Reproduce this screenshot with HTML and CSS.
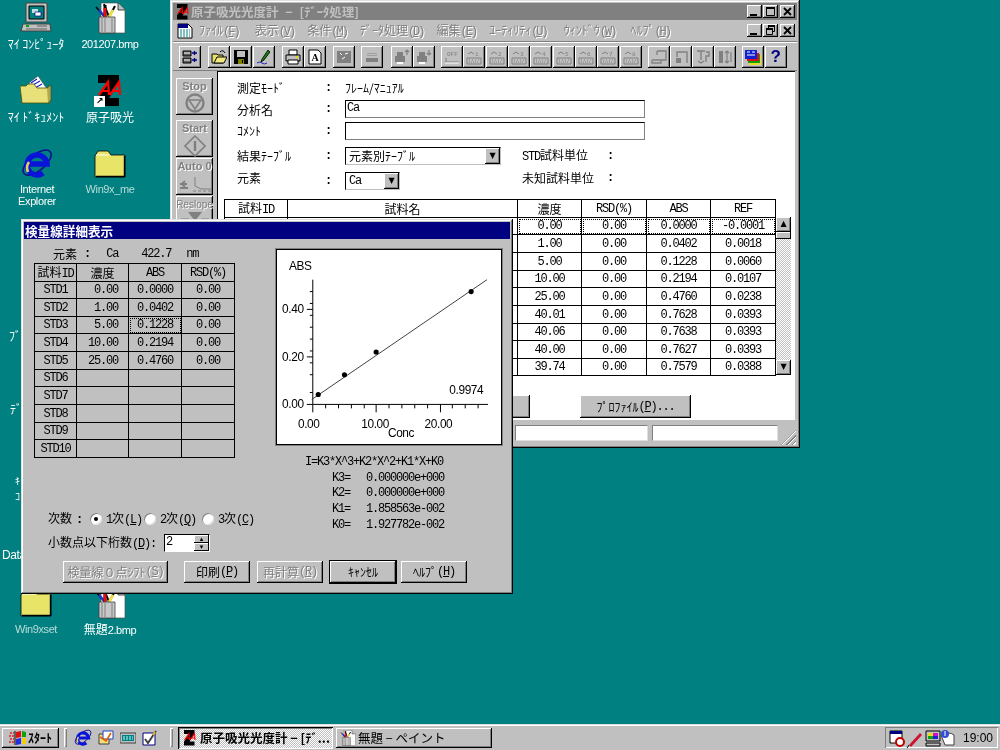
FILE: index.html
```html
<!DOCTYPE html>
<html lang="ja">
<head>
<meta charset="utf-8">
<title>原子吸光光度計</title>
<link rel="stylesheet" href="styles.css">
</head>
<body>
<svg class="defs" aria-hidden="true">
  <symbol id="zlogo" viewBox="0 0 32 32">
    <path d="M4 0H25V8L15 23H25V31H4V23L14 8H4Z" fill="#000"/>
    <g fill="none" stroke="#f00" stroke-width="2.2">
      <path d="M5 20 14 7 15 20M8 16H15"/><path d="M16 20 25 7 26 20M19 16H26"/>
    </g>
  </symbol>
  <symbol id="computer" viewBox="0 0 32 32">
    <path d="M6 1H27V20H6Z" fill="#c0c0c0" stroke="#404040"/>
    <path d="M9 4H24V17H9Z" fill="#008080" stroke="#000"/>
    <path d="M12 7H18V11H12Z" fill="#c0e0e0"/><path d="M15 10H21V14H15Z" fill="#fff" stroke="#000080" stroke-width=".7"/>
    <path d="M3 22H30L31 29H1Z" fill="#c0c0c0" stroke="#404040"/>
    <path d="M6 24H9" stroke="#0a0" stroke-width="2"/><path d="M17 24H27M6 27H27" stroke="#606060"/>
  </symbol>
  <symbol id="paintdoc" viewBox="0 0 32 32">
    <path d="M7 1H24L31 8V31H7Z" fill="#fff" stroke="#505050" stroke-width=".7"/>
    <path d="M24 1V8H31" fill="#c0c0c0" stroke="#000" stroke-width=".7"/>
    <path d="M10 2 15 15" stroke="#000" stroke-width="2"/>
    <path d="M2 5 11 15" stroke="#000" stroke-width="1.6"/><path d="M5 8 11 15" stroke="#2030d0" stroke-width="2.4"/>
    <path d="M11 3V15" stroke="#000" stroke-width="3"/><path d="M11 6V15" stroke="#e01010" stroke-width="3"/>
    <path d="M21 4 15 15" stroke="#000" stroke-width="2"/><path d="M19 8 15 15" stroke="#f0e040" stroke-width="2.6"/>
    <path d="M5 15H21V31H5Z" fill="#c8c8c8" stroke="#404040" stroke-width=".8"/>
    <path d="M8 16V30M11 16V30M18 16V30" stroke="#808080"/>
  </symbol>
  <symbol id="docfolder" viewBox="0 0 32 32">
    <path d="M9 8 18 1 27 14 18 20Z" fill="#fff" stroke="#505050" stroke-width=".6"/>
    <path d="M11 8 17 4M13 10 20 6M15 13 22 9" stroke="#2020c0" stroke-width="1.2"/>
    <path d="M0 11H6L8 9H14L17 13H30V28H2Z" fill="#e8e078" stroke="#505000" stroke-width=".8"/>
    <path d="M27 13 31 10V25L28 28" fill="#b0a850" stroke="#404000" stroke-width=".6"/>
  </symbol>
  <symbol id="folder" viewBox="0 0 32 28">
    <path d="M1 6 4 1H14L17 5H31V27H1Z" fill="#e8e468" stroke="#000" stroke-width=".8"/>
    <path d="M2 5H15" stroke="#fff"/>
    <path d="M2 26.5H30.5V6" fill="none" stroke="#000" stroke-width="1.4"/>
  </symbol>
  <symbol id="ie" viewBox="0 0 32 32">
    <ellipse cx="17" cy="15" rx="17" ry="8" transform="rotate(-40 16 16)" fill="none" stroke="#101090" stroke-width="1.6"/>
    <path d="M8 16H26A10 10 0 1 0 22 25" fill="none" stroke="#0a14d8" stroke-width="5.5"/>
    <path d="M8 14A10 10 0 0 0 7 24" fill="none" stroke="#e8d060" stroke-width="2.6"/>
  </symbol>
  <symbol id="flag" viewBox="0 0 18 16">
    <path d="M7 2 12 1V7L7 8Z" fill="#e01010"/><path d="M13 1 17 2V7L13 7Z" fill="#10a010"/>
    <path d="M7 9 12 8V14L7 15Z" fill="#2030e0"/><path d="M13 8 17 8V14L13 14Z" fill="#f0d000"/>
    <path d="M1 3H5M0 6H5M1 9H5M0 12H5" stroke="#e02020" stroke-width="1.4" stroke-dasharray="2 1"/>
    <path d="M6 1V15" stroke="#000"/>
  </symbol>
  <symbol id="kbd" viewBox="0 0 16 16">
    <path d="M1 9H15V15H1Z" fill="#c0c0c0" stroke="#808080"/>
    <path d="M3 11H4M6 11H7M9 11H10M12 11H13M3 13H13" stroke="#808080" stroke-dasharray="1 1"/>
    <path d="M2 5 5 3 8 5" fill="none" stroke="#808080"/>
  </symbol>
  <symbol id="c-min" viewBox="0 0 15 13"><path d="M3 9H10V11H3Z" fill="#000"/></symbol>
  <symbol id="c-max" viewBox="0 0 15 13"><path d="M3 2.500H11.500V10.500H3.500V2.500" fill="none" stroke="#000"/><path d="M3 2H12V4H3Z" fill="#000"/></symbol>
  <symbol id="c-res" viewBox="0 0 15 13"><path d="M5.500 1.500H11.500V7.500H9.500M5.500 1.500V4M3.500 4.500H9.500V10.500H3.500Z" fill="none" stroke="#000"/><path d="M5 1H12V3H5ZM3 4H10V6H3Z" fill="#000"/></symbol>
  <symbol id="c-x" viewBox="0 0 15 13"><path d="M4 3 11 10M11 3 4 10" stroke="#000" stroke-width="1.8"/></symbol>
</svg>

<main class="desktop">
  <div class="di di-comp"><svg class="ic32"><use href="#computer"/></svg><span class="lbl">ﾏｲ ｺﾝﾋﾟｭｰﾀ</span></div>
  <div class="di di-bmp"><svg class="ic32"><use href="#paintdoc"/></svg><span class="lbl lat">201207.bmp</span></div>
  <div class="di di-docs"><svg class="ic32"><use href="#docfolder"/></svg><span class="lbl">ﾏｲ ﾄﾞｷｭﾒﾝﾄ</span></div>
  <div class="di di-z"><span class="zwrap"><svg class="ic32"><use href="#zlogo"/></svg><span class="shortcut">↗</span></span><span class="lbl">原子吸光</span></div>
  <div class="di di-ie"><svg class="ic32"><use href="#ie"/></svg><span class="lbl lat">Internet<br>Explorer</span></div>
  <div class="di di-f1"><svg class="ic32"><use href="#folder"/></svg><span class="lbl lat dim">Win9x_me</span></div>
  <div class="di di-f2"><svg class="ic32"><use href="#folder"/></svg><span class="lbl lat dim">Win9xset</span></div>
  <div class="di di-mu"><svg class="ic32"><use href="#paintdoc"/></svg><span class="lbl">無題<span class="lat">2.bmp</span></span></div>
  <span class="peek peek-a">ﾌﾞ</span>
  <span class="peek peek-b">ﾃﾞ</span>
  <span class="peek peek-c">ｷ<br>ｺ</span>
  <span class="peek peek-d lat">Data</span>

  <section class="win main-win">
    <header class="titlebar inactive">
      <svg class="ic16"><use href="#zlogo"/></svg>
      <span class="title-text">原子吸光光度計 − [ﾃﾞｰﾀ処理]</span>
      <span class="caps">
        <span class="cap"><svg><use href="#c-min"/></svg></span><span class="cap cap-gap"><svg><use href="#c-max"/></svg></span><span class="cap"><svg><use href="#c-x"/></svg></span>
      </span>
    </header>
    <nav class="menubar">
      <svg class="docicon" viewBox="0 0 16 16"><path d="M1 1H11L15 5V15H1Z" fill="#fff" stroke="#000"/><path d="M1 1H11V5H1Z" fill="#000080"/><path d="M3 7H13M3 9H13M3 11H13M3 13H13" stroke="#008080" stroke-dasharray="2 1"/></svg>
      <span class="mi mi-a">ﾌｧｲﾙ<span class="m">(<u>F</u>)</span></span>
      <span class="mi">表示<span class="m">(<u>V</u>)</span></span>
      <span class="mi">条件<span class="m">(<u>M</u>)</span></span>
      <span class="mi">ﾃﾞｰﾀ処理<span class="m">(<u>D</u>)</span></span>
      <span class="mi">編集<span class="m">(<u>E</u>)</span></span>
      <span class="mi mi-u">ﾕｰﾃｨﾘﾃｨ<span class="m">(<u>U</u>)</span></span>
      <span class="mi mi-w">ｳｨﾝﾄﾞｳ<span class="m">(<u>W</u>)</span></span>
      <span class="mi">ﾍﾙﾌﾟ<span class="m">(<u>H</u>)</span></span>
      <span class="caps caps-mdi">
        <span class="cap"><svg><use href="#c-min"/></svg></span><span class="cap cap-gap"><svg><use href="#c-res"/></svg></span><span class="cap"><svg><use href="#c-x"/></svg></span>
      </span>
    </nav>
    <div class="toolbar">
      <span class="tb g0"><svg viewBox="0 0 16 16"><path d="M1 2H9V7H1ZM1 9H9V14H1Z" fill="#606060" stroke="#000"/><path d="M2 4H8M2 11H8" stroke="#fff"/><path d="M10 4H15M12.500 2V6M10 11H15M12.500 9V13" stroke="#000080" stroke-width="1.4"/></svg></span>
      <span class="tb g1"><svg viewBox="0 0 16 16"><path d="M1 5H6L7 6H12V14H1Z" fill="#e8e068" stroke="#000"/><path d="M3 14 6 8H16L13 14Z" fill="#f0e880" stroke="#000"/><path d="M9 3Q12 0 14 4" fill="none" stroke="#000"/></svg></span>
      <span class="tb"><svg viewBox="0 0 16 16"><path d="M1 1H15V15H1Z" fill="#000"/><path d="M4 2H12V8H4Z" fill="#c0c0c0"/><path d="M5 10H11V15H5Z" fill="#808000"/><path d="M9 11H10V14H9Z" fill="#000"/></svg></span>
      <span class="tb"><svg viewBox="0 0 16 16"><path d="M12 1 6 10 5 13 8 11 14 3Z" fill="#108010" stroke="#000" stroke-width=".8"/><path d="M1 14Q4 12 6 14T11 14" fill="none" stroke="#2020c0"/></svg></span>
      <span class="tb g2"><svg viewBox="0 0 16 16"><path d="M4 1H12V6H4Z" fill="#fff" stroke="#000"/><path d="M1 6H15V12H1Z" fill="#c0c0c0" stroke="#000"/><path d="M3 11H13V15H3Z" fill="#fff" stroke="#000"/><path d="M11 8H13" stroke="#e0e000" stroke-width="2"/></svg></span>
      <span class="tb"><svg viewBox="0 0 16 16"><path d="M2 1H11L14 4V15H2Z" fill="#fff" stroke="#000"/><text x="4.500" y="12" class="tbt">A</text></svg></span>
      <span class="tb g2 dis"><svg viewBox="0 0 16 16"><path d="M1 2H15V14H1Z" fill="#808080"/><path d="M4 4 6 6M9 5 12 4M6 10 9 8" stroke="#fff"/></svg></span>
      <span class="tb g3 dis"><svg viewBox="0 0 16 16"><path d="M2 9H14V13H2Z" fill="#808080"/><path d="M4 7V4M6 7V4M8 7V4M10 7V4M12 7V4" stroke="#808080" stroke-dasharray="1 1"/></svg></span>
      <span class="tb g4 dis"><svg viewBox="0 0 16 16"><path d="M1 7H11V13H1ZM3 7V3H9V7" fill="#808080"/><path d="M3 13H9V15H3Z" fill="#fff"/><path d="M13 1V6M11 3 13 1 15 3" fill="none" stroke="#808080" stroke-width="1.2"/></svg></span>
      <span class="tb dis"><svg viewBox="0 0 16 16"><path d="M1 7H11V13H1ZM3 7V3H9V7" fill="#808080"/><path d="M3 13H9V15H3Z" fill="#fff"/><path d="M13 1V6M11 4 13 6 15 4" fill="none" stroke="#808080" stroke-width="1.2"/></svg></span>
      <span class="tb g5 dis"><svg viewBox="0 0 16 16"><text x="3" y="7" class="tbn">OFF</text><path d="M1 13H15M2 9V13" stroke="#808080"/><path d="M1 14H15" stroke="#fff"/></svg></span>
      <span class="tb dis"><svg viewBox="0 0 16 16"><use href="#kbd"/><text x="9" y="7" class="tbn">1</text></svg></span>
      <span class="tb dis"><svg viewBox="0 0 16 16"><use href="#kbd"/><text x="9" y="7" class="tbn">2</text></svg></span>
      <span class="tb dis"><svg viewBox="0 0 16 16"><use href="#kbd"/><text x="9" y="7" class="tbn">3</text></svg></span>
      <span class="tb dis"><svg viewBox="0 0 16 16"><use href="#kbd"/><text x="9" y="7" class="tbn">4</text></svg></span>
      <span class="tb dis"><svg viewBox="0 0 16 16"><use href="#kbd"/><text x="9" y="7" class="tbn">5</text></svg></span>
      <span class="tb dis"><svg viewBox="0 0 16 16"><use href="#kbd"/><text x="9" y="7" class="tbn">6</text></svg></span>
      <span class="tb dis"><svg viewBox="0 0 16 16"><use href="#kbd"/><text x="9" y="7" class="tbn">7</text></svg></span>
      <span class="tb dis"><svg viewBox="0 0 16 16"><use href="#kbd"/><text x="9" y="7" class="tbn">8</text></svg></span>
      <span class="tb g6 dis"><svg viewBox="0 0 16 16"><path d="M6 2H15V11H6M6 2V6M1 11H10M1 11V14H10V11" fill="none" stroke="#808080" stroke-width="1.3"/></svg></span>
      <span class="tb dis"><svg viewBox="0 0 16 16"><path d="M4 8V3H14V14" fill="none" stroke="#808080" stroke-width="1.4"/><path d="M3 9H8V14H3Z" fill="#808080"/></svg></span>
      <span class="tb dis"><svg viewBox="0 0 16 16"><path d="M2 2H10M6 2V11M11 3H14V7H11V13M3 12 6 14 9 12" fill="none" stroke="#808080" stroke-width="1.4"/></svg></span>
      <span class="tb dis"><svg viewBox="0 0 16 16"><path d="M2 2H6V14H2Z" fill="#808080"/><path d="M10 2V14M8 4 10 2 12 4M8 12 10 14 12 12M14 3V13" fill="none" stroke="#808080" stroke-width="1.2"/></svg></span>
      <span class="tb g7"><svg viewBox="0 0 16 16"><path d="M4 6H16V16H4Z" fill="#e8e020"/><path d="M3 5H15V14H3Z" fill="#10a010"/><path d="M2 4H14V12H2Z" fill="#e01010"/><path d="M0 1H12V10H0Z" fill="#1020d0"/><path d="M2 3H5M7 3H10M2 6H10" stroke="#fff"/></svg></span>
      <span class="tb help-btn">?</span>
    </div>
    <div class="work">
      <aside class="side">
        <span class="sbtn">Stop<svg viewBox="0 0 20 20"><circle cx="10" cy="10" r="8.500" fill="none" stroke="#808080" stroke-width="2.400"/><path d="M4 7H16L10 16Z" fill="none" stroke="#808080" stroke-width="1.600"/></svg></span>
        <span class="sbtn sbtn-start">Start<svg viewBox="0 0 22 22"><path d="M11 1 21 11 11 21 1 11Z" fill="none" stroke="#808080" stroke-width="1.600"/><path d="M11 6V16" stroke="#808080" stroke-width="2.400"/></svg></span>
        <span class="sbtn sbtn-auto">Auto 0<svg viewBox="0 0 32 16"><path d="M1 8H8M1 12H9M6 5 3 8 6 11" fill="none" stroke="#808080" stroke-width="2"/><path d="M16 1V10L22 13H32" fill="none" stroke="#808080"/><path d="M14 15H32" stroke="#808080" stroke-dasharray="3 2"/></svg></span>
        <span class="sbtn sbtn-res">Reslope<svg viewBox="0 0 32 14"><path d="M9 1H23L16 10Z" fill="#808080"/><path d="M2 8H10V14H2ZM22 8H30V14H22Z" fill="none" stroke="#808080"/></svg></span>
      </aside>
      <div class="client">
        <div class="form">
          <span>測定ﾓｰﾄﾞ</span><span class="colon">:</span><span class="val">ﾌﾚｰﾑ/ﾏﾆｭｱﾙ</span>
          <span class="lift-s">分析名</span><span class="colon">:</span><span class="input input-long m">Ca</span>
          <span>ｺﾒﾝﾄ</span><span class="colon">:</span><span class="input input-long"></span>
          <span>結果ﾃｰﾌﾞﾙ</span><span class="colon">:</span>
          <span class="unit-row">
            <span class="combo combo-long">元素別ﾃｰﾌﾞﾙ<span class="drop">▼</span></span>
            <span class="unit"><span class="m">STD</span>試料単位</span><span class="colon">:</span>
          </span>
          <span class="lift">元素</span><span class="colon">:</span>
          <span class="unit-row">
            <span class="combo combo-short"><span class="m">Ca</span><span class="drop">▼</span></span>
            <span class="unit unit-b lift">未知試料単位</span><span class="colon lift">:</span>
          </span>
        </div>
        <div class="table-wrap">
          <table class="grid main-grid m">
            <colgroup><col class="c1"><col class="c2"><col class="c3"><col class="c4"><col class="c3"><col class="c4"></colgroup>
            <tr class="r18"><th class="j">試料<span class="m">ID</span></th><th class="j">試料名</th><th class="j">濃度</th><th>RSD(%)</th><th>ABS</th><th>REF</th></tr>
            <tr class="r17"><td></td><td></td><td class="focus">0.00</td><td class="focus">0.00</td><td class="focus">0.0000</td><td class="focus">-0.0001</td></tr>
            <tr class="r18"><td></td><td></td><td>1.00</td><td>0.00</td><td>0.0402</td><td>0.0018</td></tr>
            <tr class="r18"><td></td><td></td><td>5.00</td><td>0.00</td><td>0.1228</td><td>0.0060</td></tr>
            <tr class="r17"><td></td><td></td><td>10.00</td><td>0.00</td><td>0.2194</td><td>0.0107</td></tr>
            <tr class="r18"><td></td><td></td><td>25.00</td><td>0.00</td><td>0.4760</td><td>0.0238</td></tr>
            <tr class="r18"><td></td><td></td><td>40.01</td><td>0.00</td><td>0.7628</td><td>0.0393</td></tr>
            <tr class="r17"><td></td><td></td><td>40.06</td><td>0.00</td><td>0.7638</td><td>0.0393</td></tr>
            <tr class="r18"><td></td><td></td><td>40.00</td><td>0.00</td><td>0.7627</td><td>0.0393</td></tr>
            <tr class="r17"><td></td><td></td><td>39.74</td><td>0.00</td><td>0.7579</td><td>0.0388</td></tr>
          </table>
          <div class="vscroll">
            <span class="sb-btn">▲</span><span class="sb-thumb"></span><span class="sb-track"></span><span class="sb-btn">▼</span>
          </div>
        </div>
        <div class="client-btns">
          <span class="btn wide"></span>
          <span class="btn wide">ﾌﾟﾛﾌｧｲﾙ<span class="m">(<u>P</u>)...</span></span>
        </div>
      </div>
    </div>
    <footer class="status">
      <span class="sfield sf-a"></span><span class="sfield sf-b"></span>
      <span class="grip"></span>
    </footer>
  </section>

  <section class="win dialog">
    <header class="titlebar active"><span class="title-text">検量線詳細表示</span></header>
    <div class="dlg-body">
      <div class="dlg-left">
        <div class="info">元素<span class="info-c">:</span><span class="m info-ca">Ca</span><span class="m info-w">422.7</span><span class="m">nm</span></div>
        <table class="grid dlg-grid m">
          <colgroup><col class="d1"><col class="d2"><col class="d3"><col class="d4"></colgroup>
          <tr class="r18"><th class="j">試料<span class="m">ID</span></th><th class="j">濃度</th><th>ABS</th><th>RSD(%)</th></tr>
          <tr class="r17"><td>STD1</td><td class="rt">0.00</td><td>0.0000</td><td>0.00</td></tr>
          <tr class="r18"><td>STD2</td><td class="rt">1.00</td><td>0.0402</td><td>0.00</td></tr>
          <tr class="r17"><td>STD3</td><td class="rt">5.00</td><td class="focus">0.1228</td><td>0.00</td></tr>
          <tr class="r18"><td>STD4</td><td class="rt">10.00</td><td>0.2194</td><td>0.00</td></tr>
          <tr class="r18"><td>STD5</td><td class="rt">25.00</td><td>0.4760</td><td>0.00</td></tr>
          <tr class="r17"><td>STD6</td><td></td><td></td><td></td></tr>
          <tr class="r18"><td>STD7</td><td></td><td></td><td></td></tr>
          <tr class="r18"><td>STD8</td><td></td><td></td><td></td></tr>
          <tr class="r17"><td>STD9</td><td></td><td></td><td></td></tr>
          <tr class="r18"><td>STD10</td><td></td><td></td><td></td></tr>
        </table>
        <div class="order">
          <span class="order-l">次数<span class="info-c2">:</span></span>
          <span class="radio on"></span><span class="rl"><span class="m">1</span>次<span class="m">(<u>L</u>)</span></span>
          <span class="radio"></span><span class="rl rl-b"><span class="m">2</span>次<span class="m">(<u>Q</u>)</span></span>
          <span class="radio"></span><span class="rl"><span class="m">3</span>次<span class="m">(<u>C</u>)</span></span>
        </div>
        <div class="digits">
          <span class="digits-l">小数点以下桁数<span class="m">(<u>D</u>):</span></span>
          <span class="spin"><span class="m spin-v">2</span><span class="spin-btns"><span class="spin-b">▴</span><span class="spin-b">▾</span></span></span>
        </div>
      </div>
      <div class="dlg-right">
        <svg class="chart" viewBox="0 0 226 196">
          <path class="axis" d="M36 30V156M36 156H213"/>
          <path class="axis" d="M33 42H36M33 54H36M33 66H36M33 78H36M33 90H36M33 102H36M33 114H36M33 126H36M33 144H36M30 60H36M30 108H36M30 156H36"/>
          <path class="axis" d="M49 156V160M62 156V160M75 156V160M88 156V160M113 156V160M126 156V160M139 156V160M152 156V160M177 156V160M190 156V160M203 156V160M36 156V164M100 156V164M165 156V164"/>
          <path class="fit" d="M35 151 212 30"/>
          <circle cx="41.500" cy="146" r="2.600"/><circle cx="68" cy="126" r="2.600"/><circle cx="100" cy="103" r="2.600"/><circle cx="196" cy="42" r="2.600"/>
          <text x="12" y="20" class="ct">ABS</text>
          <text x="5" y="64" class="ct">0.40</text><text x="5" y="112" class="ct">0.20</text><text x="5" y="160" class="ct">0.00</text>
          <text x="21" y="180" class="ct">0.00</text><text x="85" y="180" class="ct">10.00</text><text x="149" y="180" class="ct">20.00</text>
          <text x="112" y="189" class="ct">Conc</text>
          <text x="174" y="145" class="ct">0.9974</text>
        </svg>
        <div class="eq m">
          <div>I=K3*X^3+K2*X^2+K1*X+K0</div>
          <div class="kv"><span>K3=</span><span>0.000000e+000</span></div>
          <div class="kv"><span>K2=</span><span>0.000000e+000</span></div>
          <div class="kv"><span>K1=</span><span>1.858563e-002</span></div>
          <div class="kv"><span>K0=</span><span>1.927782e-002</span></div>
        </div>
      </div>
    </div>
    <div class="dlg-btns">
      <span class="btn b-shift disabled">検量線０点ｼﾌﾄ<span class="m">(<u>S</u>)</span></span>
      <span class="btn b-mid">印刷<span class="m">(<u>P</u>)</span></span>
      <span class="btn b-mid disabled">再計算<span class="m">(<u>R</u>)</span></span>
      <span class="btn b-mid default">ｷｬﾝｾﾙ</span>
      <span class="btn b-mid">ﾍﾙﾌﾟ<span class="m">(<u>H</u>)</span></span>
    </div>
  </section>

  <footer class="taskbar">
    <span class="btn start"><svg class="flag"><use href="#flag"/></svg>ｽﾀｰﾄ</span>
    <span class="handle h-a"></span>
    <span class="quick">
      <svg class="ic18"><use href="#ie"/></svg>
      <svg class="ic16" viewBox="0 0 16 16"><path d="M1 4H11V14H1Z" fill="#f0e080" stroke="#404040"/><path d="M5 1H15V9H5Z" fill="#fff" stroke="#2040c0"/><path d="M2 7 8 11 13 3" fill="none" stroke="#e06000" stroke-width="1.6"/></svg>
      <svg class="ic16" viewBox="0 0 16 16"><path d="M0 3H16V13H0Z" fill="#c0c0c0" stroke="#404040"/><path d="M2 5H14V11H2Z" fill="#008080"/><path d="M3 7H13M3 9H13" stroke="#c0ffff" stroke-dasharray="2 1"/></svg>
      <svg class="ic16" viewBox="0 0 16 16"><path d="M1 3H13V15H1Z" fill="#fff" stroke="#000080"/><path d="M3 9 6 13 14 1" fill="none" stroke="#404040" stroke-width="2"/><path d="M11 5 13 2" stroke="#e0c020" stroke-width="2"/></svg>
    </span>
    <span class="handle h-b"></span>
    <span class="task task-on"><svg class="ic16"><use href="#zlogo"/></svg>原子吸光光度計 − [ﾃﾞ...</span>
    <span class="task task-off"><svg class="ic16"><use href="#paintdoc"/></svg>無題 − ペイント</span>
    <span class="tray">
      <svg class="tray-ic" viewBox="0 0 66 20">
        <path d="M1 3H13V15H1Z" fill="#fff" stroke="#000"/><path d="M1 3H13V6H1Z" fill="#000080"/><circle cx="11" cy="14" r="4" fill="#fff" stroke="#c00000" stroke-width="2"/>
        <path d="M20 17 31 5 33 7 22 19Z" fill="#d01030"/><path d="M20 17 18 20" stroke="#000"/>
        <path d="M37 3H51V13H37Z" fill="#c0c0c0" stroke="#000"/><path d="M39 5H44V8H39Z" fill="#e0e020"/><path d="M44 5H49V8H44Z" fill="#d010d0"/><path d="M39 8H44V11H39Z" fill="#10a010"/><path d="M44 8H49V11H44Z" fill="#2020d0"/><path d="M37 15H51V18H37Z" fill="#c0c0c0" stroke="#000"/>
        <path d="M52 7Q60 3 65 7V17H56Z" fill="#fff" stroke="#404040"/><circle cx="56" cy="6" r="4" fill="#3050d0"/><path d="M56 3V8" stroke="#fff"/>
      </svg>
      <span class="clock">19:00</span>
    </span>
  </footer>
</main>
</body>
</html>
```
FILE: styles.css
```css
* { box-sizing: border-box; }
html, body { margin: 0; padding: 0; }
body {
  width: 1000px;
  height: 750px;
  overflow: hidden;
  font: 12px/16px "Noto Sans CJK JP", "Liberation Sans", sans-serif;
  color: #000;
}
.defs { position: absolute; width: 0; height: 0; }
.m {
  font-family: "Liberation Mono", monospace;
  font-size: 12px;
  letter-spacing: -1.2px;
}
.j { font-family: "Noto Sans CJK JP", sans-serif; letter-spacing: 0; }
.lat { font-family: "Liberation Sans", sans-serif; font-size: 11px; letter-spacing: -.4px; }

.desktop {
  position: relative;
  width: 1000px;
  height: 750px;
  background: #008080;
  overflow: hidden;
  filter: blur(.4px);
}

/* desktop icons: free canvas */
.di {
  position: absolute;
  width: 76px;
  display: flex;
  flex-direction: column;
  align-items: center;
  color: #fff;
}
.ic32 { width: 32px; height: 32px; display: block; }
.ic16 { width: 16px; height: 16px; flex: none; }
.ic18 { width: 18px; height: 18px; flex: none; }
.lbl { margin-top: 4px; line-height: 12px; text-align: center; white-space: nowrap; }
.dim { color: #b8dcd8; }
.di-comp { left: -2px; top: 2px; }
.di-bmp { left: 72px; top: 2px; }
.di-docs { left: -2px; top: 75px; }
.di-z { left: 72px; top: 75px; }
.di-ie { left: -1px; top: 148px; }
.di-f1 { left: 72px; top: 148px; }
.di-f2 { left: -2px; top: 587px; }
.di-mu { left: 72px; top: 587px; }
.di-f1 .lbl { margin-top: 3px; }
.di-ie .lbl { margin-top: 3px; }
.di-f2 .lbl, .di-mu .lbl { margin-top: 4px; }
.zwrap { position: relative; display: block; width: 32px; height: 32px; }
.shortcut {
  position: absolute;
  left: 0;
  bottom: 0;
  width: 11px;
  height: 11px;
  background: #fff;
  font: bold 9px/11px "DejaVu Sans", sans-serif;
  text-align: center;
  color: #000;
}
.peek { position: absolute; color: #fff; line-height: 13px; }
.peek-a { left: 9px; top: 329px; }
.peek-b { left: 10px; top: 402px; }
.peek-c { left: 15px; top: 473px; font-size: 10px; line-height: 15px; }
.peek-d { left: 2px; top: 549px; font-size: 12px; }

/* windows */
.win {
  position: absolute;
  display: flex;
  flex-direction: column;
  background: #c0c0c0;
  padding: 3px;
  box-shadow: inset -1px -1px #000, inset 1px 1px #dfdfdf, inset -2px -2px #808080, inset 2px 2px #fff;
}
.main-win { left: 170px; top: 0; width: 630px; height: 448px; }
.dialog { left: 21px; top: 219px; width: 492px; height: 375px; }

.titlebar {
  display: flex;
  align-items: center;
  height: 17px;
  padding-left: 2px;
  flex: none;
}
.titlebar .title-text {
  font-weight: 700;
  font-size: 12.5px;
  word-spacing: 4px;
  white-space: nowrap;
  margin-left: 0;
}
.inactive { background: #808080; color: #c0c0c0; }
.active { background: #000080; color: #fff; }
.active .title-text { margin-left: -1px; font-size: 12.6px; }
.caps { margin-left: auto; margin-right: 2px; display: flex; }
.cap {
  width: 15px;
  height: 13px;
  background: #c0c0c0;
  box-shadow: inset -1px -1px #000, inset 1px 1px #fff, inset -2px -2px #808080;
}
.cap svg { display: block; width: 15px; height: 13px; }
.cap-gap { margin: 0 2px 0 1px; }

.menubar {
  display: flex;
  align-items: center;
  height: 21px;
  padding-left: 4px;
  flex: none;
  color: #808080;
  text-shadow: 1px 1px 0 #fff;
}
.docicon { width: 16px; height: 16px; flex: none; margin-right: 6px; }
.mi { margin-right: 13px; white-space: nowrap; }
.mi .m { letter-spacing: -2px; }
.mi-a { margin-right: 16px; }
.mi-u { margin-right: 17px; }
.mi-w { margin-right: 15px; }
.caps-mdi { margin-right: 2px; text-shadow: none; }

.toolbar {
  display: flex;
  height: 30px;
  padding: 4px 0 0 6px;
  flex: none;
  border-top: 1px solid #808080;
  box-shadow: inset 0 1px #fff;
  border-bottom: 1px solid #808080;
}
.tb {
  width: 22px;
  height: 22px;
  flex: none;
  display: flex;
  align-items: center;
  justify-content: center;
  background: #c0c0c0;
  box-shadow: inset -1px -1px #000, inset 1px 1px #fff, inset -2px -2px #808080;
}
.tb svg { width: 16px; height: 16px; }
.tb + .tb { margin-left: .3px; }
.g1 { margin-left: 7px !important; }
.g2 { margin-left: 7px !important; }
.g3 { margin-left: 6px !important; }
.g4 { margin-left: 8px !important; }
.g5 { margin-left: 6px !important; }
.g6 { margin-left: 6px !important; }
.g7 { margin-left: 6px !important; }
.help-btn {
  color: #000080;
  font: bold 17px/22px "Liberation Sans", sans-serif;
}
.tbt { font: bold 10px "Liberation Serif", serif; fill: #000; }
.tbn { font: 6px "Liberation Mono", monospace; fill: #808080; }

.work { flex: 1; display: flex; min-height: 0; }
.side {
  width: 44px;
  flex: none;
  padding: 7px 0 0 3px;
  display: flex;
  flex-direction: column;
  overflow: hidden;
}
.sbtn {
  width: 37px;
  height: 37px;
  flex: none;
  display: flex;
  flex-direction: column;
  align-items: center;
  color: #808080;
  font: bold 11px/13px "Liberation Sans", sans-serif;
  text-shadow: 1px 1px 0 #fff;
  box-shadow: inset -1px -1px #000, inset 1px 1px #fff, inset -2px -2px #808080;
  padding-top: 2px;
}
.sbtn svg { width: 20px; height: 20px; }
.sbtn-start { margin-top: 5px; }
.sbtn-start svg { width: 22px; height: 22px; }
.sbtn-auto { margin-top: 1px; }
.sbtn-auto svg { width: 32px; height: 16px; margin-top: 3px; }
.sbtn-res { margin-top: 1px; font-weight: 400; font-size: 10px; }
.sbtn-res svg { width: 32px; height: 14px; }

.client {
  flex: 1;
  margin-right: 2px;
  background: #fff;
  border-left: 1px solid #000;
  border-top: 1px solid #000;
  display: flex;
  flex-direction: column;
  padding: 6px 0 0 19px;
  min-width: 0;
}
.form {
  display: grid;
  grid-template-columns: 88px 20px 1fr;
  grid-template-rows: 20px 22px 22px 28px 22px;
  align-items: center;
}
.colon { font-weight: 700; font-family: "Liberation Mono", monospace; }
.lift { margin-bottom: 6px; }
.lift-s { margin-top: 2px; }
.input {
  height: 18px;
  border: 1px solid #000;
  border-right-color: #808080;
  border-bottom-color: #808080;
  padding-left: 1px;
  line-height: 14px;
}
.input-long { width: 300px; }
.unit-row { display: flex; align-items: center; }
.combo {
  display: flex;
  align-items: center;
  height: 18px;
  border: 1px solid #000;
  border-right-color: #c0c0c0;
  border-bottom-color: #c0c0c0;
  padding-left: 3px;
  position: relative;
}
.combo-long { width: 156px; }
.combo-short { width: 55px; }
.drop {
  margin-left: auto;
  width: 15px;
  height: 16px;
  background: #c0c0c0;
  font: 8px/15px "DejaVu Sans", sans-serif;
  text-align: center;
  box-shadow: inset -1px -1px #000, inset 1px 1px #fff, inset -2px -2px #808080;
}
.unit { margin-left: 21px; width: 85px; white-space: nowrap; }
.unit-b { margin-left: 122px; }

.table-wrap { display: flex; margin: 7px 0 0 -13px; }
.grid {
  border-collapse: collapse;
  table-layout: fixed;
}
.grid th, .grid td {
  border: 1px solid #000;
  padding: 0;
  text-align: center;
  font-weight: 400;
  line-height: 14px;
}
.main-grid { width: 552px; background: #fff; flex: none; }
.c1 { width: 63px; }
.c2 { width: 230px; }
.c3 { width: 64px; }
.c4 { width: 65px; }
.r18 { height: 18px; }
.r17 { height: 17px; }
.focus { outline: 1px dotted #000; outline-offset: -2px; }
.vscroll {
  width: 15px;
  height: 158px;
  margin-top: 18px;
  display: flex;
  flex-direction: column;
  flex: none;
}
.sb-btn {
  height: 15px;
  background: #c0c0c0;
  flex: none;
  font: 8px/14px "DejaVu Sans", sans-serif;
  text-align: center;
  box-shadow: inset -1px -1px #000, inset 1px 1px #fff, inset -2px -2px #808080;
}
.sb-thumb {
  height: 7px;
  flex: none;
  background: #c0c0c0;
  box-shadow: inset -1px -1px #000, inset 1px 1px #fff;
}
.sb-track {
  flex: 1;
  background: repeating-conic-gradient(#fff 0 25%, #c0c0c0 0 50%) 0 0 / 2px 2px;
}

.btn {
  display: flex;
  align-items: center;
  justify-content: center;
  flex: none;
  background: #c0c0c0;
  white-space: nowrap;
  box-shadow: inset -1px -1px #000, inset 1px 1px #fff, inset -2px -2px #808080;
}
.client-btns {
  display: flex;
  gap: 50px;
  margin: 19px 0 0 182px;
}
.wide { width: 111px; height: 23px; }
.disabled { color: #808080; text-shadow: 1px 1px 0 #fff; }
.default { box-shadow: 0 0 0 1px #000, inset -1px -1px #000, inset 1px 1px #fff, inset -2px -2px #808080; }

.status {
  height: 25px;
  flex: none;
  display: flex;
  align-items: center;
  padding-left: 342px;
}
.sfield {
  height: 16px;
  background: #fff;
  border: 1px solid #808080;
  border-right-color: #dfdfdf;
  border-bottom-color: #dfdfdf;
}
.sf-a { width: 133px; }
.sf-b { width: 126px; margin-left: 4px; }
.grip {
  margin-left: auto;
  margin-right: 1px;
  align-self: flex-end;
  width: 15px;
  height: 15px;
  background: repeating-linear-gradient(135deg, #c0c0c0 0 2px, #808080 2px 3px, #fff 3px 4px);
  clip-path: polygon(100% 0, 100% 100%, 0 100%);
}

/* dialog */
.dlg-body { display: flex; height: 322px; flex: none; }
.dlg-left { width: 252px; flex: none; padding-left: 10px; }
.info {
  display: flex;
  align-items: center;
  height: 24px;
  padding: 5px 0 0 19px;
}
.info-c { margin: 0 15px 0 7px; font-weight: 700; font-family: "Liberation Mono", monospace; }
.info-ca { width: 35px; }
.info-w { width: 45px; }
.dlg-grid { width: 201px; margin-left: 0; }
.d1 { width: 42px; }
.d2 { width: 52px; }
.d3 { width: 53px; }
.d4 { width: 53px; }
.dlg-grid .rt { text-align: right; padding-right: 10px; }
.order {
  display: flex;
  align-items: center;
  height: 18px;
  margin: 52px 0 0 14px;
}
.order-l { width: 42px; white-space: nowrap; }
.info-c2 { margin-left: 4px; font-weight: 700; font-family: "Liberation Mono", monospace; }
.radio {
  width: 12px;
  height: 12px;
  flex: none;
  border-radius: 50%;
  background: #fff;
  box-shadow: inset 1px 1px #808080, inset -1px -1px #dfdfdf, 0 0 0 .5px #c0c0c0;
  position: relative;
}
.radio.on::after {
  content: "";
  position: absolute;
  left: 4px;
  top: 4px;
  width: 4px;
  height: 4px;
  border-radius: 50%;
  background: #000;
}
.rl { margin-left: 4px; width: 38px; white-space: nowrap; flex: none; }
.rl-b { width: 42px; }
.digits {
  display: flex;
  align-items: center;
  height: 18px;
  margin: 6px 0 0 14px;
}
.digits-l { width: 116px; white-space: nowrap; }
.spin {
  display: flex;
  width: 46px;
  height: 18px;
  background: #fff;
  border: 1px solid #000;
  border-right-color: #fff;
  border-bottom-color: #fff;
  padding-left: 1px;
}
.spin-v { line-height: 15px; }
.spin-btns { margin-left: auto; width: 15px; display: flex; flex-direction: column; }
.spin-b {
  flex: 1;
  background: #c0c0c0;
  font: 7px/8px "DejaVu Sans", sans-serif;
  text-align: center;
  box-shadow: inset -1px -1px #000, inset 1px 1px #fff;
}

.dlg-right { flex: 1; padding-top: 10px; }
.chart {
  display: block;
  width: 226px;
  height: 196px;
  background: #fff;
  border: 1px solid #000;
  box-shadow: 0 0 0 1px #808080;
}
.axis { fill: none; stroke: #000; }
.fit { fill: none; stroke: #404040; }
.ct { font: 12px "Liberation Sans", sans-serif; letter-spacing: -.4px; fill: #000; }
.eq { margin: 10px 0 0 29px; line-height: 15.7px; white-space: nowrap; }
.kv { display: flex; padding-left: 27px; }
.kv span:first-child { width: 34px; }

.dlg-btns {
  display: flex;
  padding-left: 39px;
}
.dlg-btns .btn { height: 22px; }
.b-shift { width: 105px; margin-right: 16px; }
.b-mid { width: 66px; margin-right: 7px; }
.dlg-btns .default { margin-right: 5px; }

/* taskbar */
.taskbar {
  position: absolute;
  left: 0;
  right: 0;
  bottom: 0;
  height: 26px;
  background: #c0c0c0;
  border-top: 1px solid #dfdfdf;
  box-shadow: inset 0 1px #fff;
  display: flex;
  align-items: center;
  padding-left: 2px;
}
.start {
  width: 57px;
  height: 20px;
  font-weight: 700;
  gap: 1px;
}
.flag { width: 18px; height: 16px; }
.handle {
  width: 3px;
  height: 19px;
  box-shadow: inset 1px 1px #fff, inset -1px -1px #808080;
}
.h-a { margin-left: 5px; }
.h-b { margin-left: 12px; }
.quick { display: flex; align-items: center; gap: 6px; margin-left: 7px; }
.task {
  display: flex;
  align-items: center;
  gap: 2px;
  height: 22px;
  width: 155px;
  flex: none;
  padding-left: 4px;
  white-space: nowrap;
  font-size: 12.5px;
}
.task-on {
  margin-left: 5px;
  font-weight: 700;
  background: repeating-conic-gradient(#fff 0 25%, #c0c0c0 0 50%) 0 0 / 2px 2px;
  box-shadow: inset 1px 1px #000, inset -1px -1px #fff, inset 2px 2px #808080;
}
.task-off {
  margin-left: 3px;
  height: 20px;
  width: 156px;
  box-shadow: inset -1px -1px #000, inset 1px 1px #fff, inset -2px -2px #808080;
}
.tray {
  margin-left: auto;
  margin-right: 2px;
  width: 113px;
  height: 21px;
  display: flex;
  align-items: center;
  padding-left: 4px;
  box-shadow: inset 1px 1px #808080, inset -1px -1px #fff;
}
.tray-ic { width: 66px; height: 20px; flex: none; }
.clock { margin-left: 8px; font-family: "Liberation Sans", sans-serif; }
```
